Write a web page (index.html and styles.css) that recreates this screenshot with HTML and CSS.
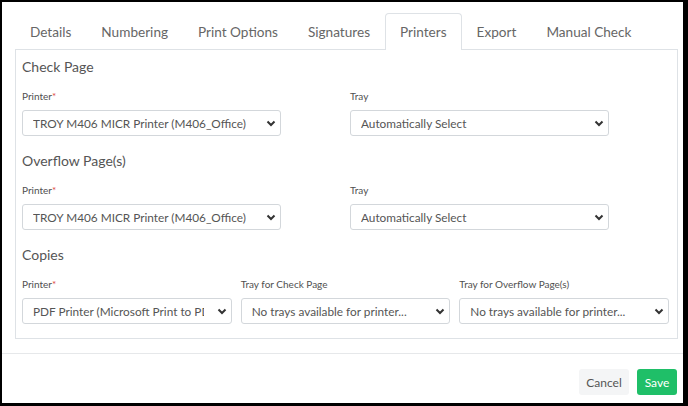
FILE: index.html
```html
<!DOCTYPE html>
<html>
<head>
<meta charset="utf-8">
<link rel="stylesheet" href="styles.css">
</head>
<body>
<div class="frame">
  <div class="content">
    <ul class="tabs">
      <li class="tab">Details</li>
      <li class="tab">Numbering</li>
      <li class="tab">Print Options</li>
      <li class="tab">Signatures</li>
      <li class="tab active">Printers</li>
      <li class="tab">Export</li>
      <li class="tab">Manual Check</li>
    </ul>
    <div class="panel">
      <section class="section">
        <h3 class="heading">Check Page</h3>
        <div class="row two">
          <div class="field">
            <label class="label">Printer<span class="req">*</span></label>
            <div class="select"><span class="val">TROY M406 MICR Printer (M406_Office)</span><svg class="chev" width="10" height="7" viewBox="0 0 10 7"><path d="M1.5 1.5 5 5 8.5 1.5" fill="none" stroke="#333" stroke-width="2"/></svg></div>
          </div>
          <div class="field">
            <label class="label">Tray</label>
            <div class="select"><span class="val">Automatically Select</span><svg class="chev" width="10" height="7" viewBox="0 0 10 7"><path d="M1.5 1.5 5 5 8.5 1.5" fill="none" stroke="#333" stroke-width="2"/></svg></div>
          </div>
        </div>
      </section>
      <section class="section">
        <h3 class="heading">Overflow Page(s)</h3>
        <div class="row two">
          <div class="field">
            <label class="label">Printer<span class="req">*</span></label>
            <div class="select"><span class="val">TROY M406 MICR Printer (M406_Office)</span><svg class="chev" width="10" height="7" viewBox="0 0 10 7"><path d="M1.5 1.5 5 5 8.5 1.5" fill="none" stroke="#333" stroke-width="2"/></svg></div>
          </div>
          <div class="field">
            <label class="label">Tray</label>
            <div class="select"><span class="val">Automatically Select</span><svg class="chev" width="10" height="7" viewBox="0 0 10 7"><path d="M1.5 1.5 5 5 8.5 1.5" fill="none" stroke="#333" stroke-width="2"/></svg></div>
          </div>
        </div>
      </section>
      <section class="section">
        <h3 class="heading">Copies</h3>
        <div class="row three">
          <div class="field">
            <label class="label">Printer<span class="req">*</span></label>
            <div class="select"><span class="val">PDF Printer (Microsoft Print to PDF)</span><svg class="chev" width="10" height="7" viewBox="0 0 10 7"><path d="M1.5 1.5 5 5 8.5 1.5" fill="none" stroke="#333" stroke-width="2"/></svg></div>
          </div>
          <div class="field">
            <label class="label">Tray for Check Page</label>
            <div class="select"><span class="val">No trays available for printer...</span><svg class="chev" width="10" height="7" viewBox="0 0 10 7"><path d="M1.5 1.5 5 5 8.5 1.5" fill="none" stroke="#333" stroke-width="2"/></svg></div>
          </div>
          <div class="field">
            <label class="label">Tray for Overflow Page(s)</label>
            <div class="select"><span class="val">No trays available for printer...</span><svg class="chev" width="10" height="7" viewBox="0 0 10 7"><path d="M1.5 1.5 5 5 8.5 1.5" fill="none" stroke="#333" stroke-width="2"/></svg></div>
          </div>
        </div>
      </section>
    </div>
  </div>
  <div class="footer">
    <button class="btn cancel">Cancel</button>
    <button class="btn save">Save</button>
  </div>
</div>
</body>
</html>
```
FILE: styles.css
```css
* { box-sizing: border-box; }
html, body { margin: 0; padding: 0; background: #fff; }
body {
  font-family: Lato, "Open Sans", sans-serif;
  color: #555;
}
.frame {
  width: 688px;
  height: 406px;
  border-style: solid;
  border-color: #000;
  border-width: 2px 5px 3px 2px;
  display: flex;
  flex-direction: column;
}
.content {
  padding: 11px 5px 0 13px;
}
.tabs {
  list-style: none;
  margin: 0;
  padding: 0;
  display: flex;
  position: relative;
  z-index: 1;
}
.tab {
  height: 36px;
  padding: 0 14px;
  display: flex;
  align-items: center;
  white-space: nowrap;
  font-size: 13.6px;
  color: #666;
  border: 1px solid transparent;
  border-bottom: none;
  border-radius: 4px 4px 0 0;
}
.tab.active {
  border-color: #dee2e6;
  background: #fff;
  height: 37px;
  margin-bottom: -1px;
}
.panel {
  border: 1px solid #dee2e6;
  padding: 7px 8px 14px 6px;
}
.section + .section { margin-top: 15px; }
.heading {
  margin: 0;
  font-size: 14px;
  font-weight: 400;
  line-height: 20px;
  color: #555;
}
.row {
  display: grid;
  margin-top: 11px;
}
.row.two {
  grid-template-columns: 259px 259px;
  column-gap: 69px;
}
.row.three {
  grid-template-columns: 1fr 1fr 1fr;
  column-gap: 9px;
}
.field { min-width: 0; }
.label {
  display: block;
  font-size: 10px;
  line-height: 16px;
  color: #505050;
  margin-bottom: 6px;
}
.req { color: #e0493e; }
.select {
  height: 26px;
  border: 1px solid #d3d7db;
  border-radius: 3px;
  display: flex;
  align-items: center;
  padding: 0 4px 0 10px;
  font-size: 11.8px;
  color: #555;
  background: #fff;
}
.val {
  flex: 1;
  min-width: 0;
  overflow: hidden;
  white-space: nowrap;
  margin-right: 13px;
}
.chev { flex: none; }
.footer {
  margin-top: auto;
  border-top: 1px solid #e6e8ea;
  height: 50px;
  display: flex;
  justify-content: flex-end;
  align-items: flex-start;
  gap: 8px;
  padding: 15px 6px 0 0;
}
.btn {
  font-family: Lato, "Open Sans", sans-serif;
  height: 26px;
  border: none;
  border-radius: 3px;
  font-size: 12px;
  padding: 0 4px;
  cursor: pointer;
}
.cancel { background: #f4f5f6; color: #555; width: 50px; }
.save { background: #1fbf68; color: #fff; width: 40px; }
```
